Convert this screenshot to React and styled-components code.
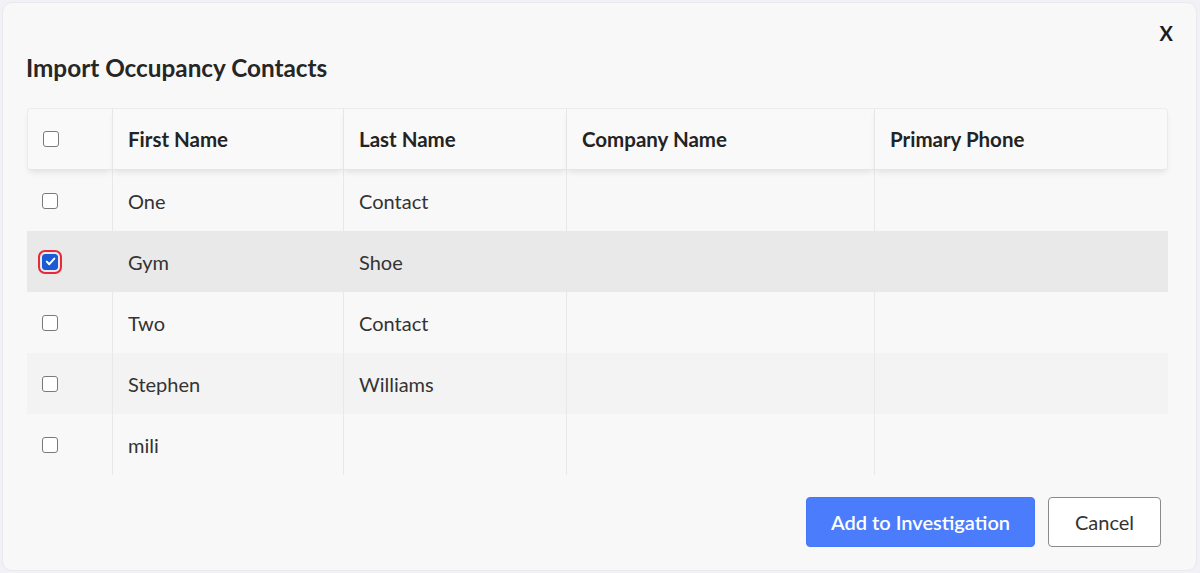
import React, { useState } from "react";
import styled, { createGlobalStyle, css } from "styled-components";

const GlobalStyle = createGlobalStyle`
    html, body {
        margin: 0;
        padding: 0;
        background: #f1f1f6;
        font-family: Lato, "Open Sans", sans-serif;
    }
    * { box-sizing: border-box; }
`;

const Modal = styled.div`
    margin: 2px;
    height: 569px;
    width: 1195px;
    background: #f8f8f8;
    border: 1px solid #e9e9ef;
    border-radius: 10px;
    display: flex;
    flex-direction: column;
    padding: 17px 28px 23px 24px;
`;

const CloseRow = styled.div`
    display: flex;
    justify-content: flex-end;
    height: 26px;
    margin-right: -5px;
`;

const CloseButton = styled.button`
    border: none;
    background: none;
    padding: 0;
    font-family: Lato, sans-serif;
    font-size: 20px;
    font-weight: 700;
    line-height: 26px;
    color: #1c1c1c;
    cursor: pointer;
`;

const Title = styled.h2`
    margin: 7px 0 0 -1px;
    font-size: 24.3px;
    line-height: 30px;
    font-weight: 700;
    color: #262626;
`;

const Table = styled.div`
    margin-top: 25px;
    display: grid;
    grid-template-columns: 85px 231px 223px 308px 294px;
`;

const HeaderRow = styled.div`
    display: contents;
`;

const HeadCell = styled.div`
    height: 62px;
    display: flex;
    align-items: center;
    padding-left: 15px;
    background: #f9f9f9;
    border-top: 1px solid #ececec;
    border-bottom: 1px solid #e6e6e6;
    border-left: 1px solid ${(p) => (p.$first ? "#ececec" : "#e6e6e6")};
    border-right: ${(p) => (p.$last ? "1px solid #ececec" : "none")};
    border-radius: ${(p) => (p.$first ? "4px 0 0 4px" : p.$last ? "0 4px 4px 0" : "0")};
    box-shadow: 0 4px 6px -2px rgba(0, 0, 0, 0.1);
    font-size: 20.5px;
    font-weight: 700;
    color: #232323;
    position: relative;
    z-index: 1;
`;

const Row = styled.div`
    display: contents;
`;

const Cell = styled.div`
    height: 61px;
    display: flex;
    align-items: center;
    padding-left: 15px;
    border-left: ${(p) => (p.$check ? "none" : "1px solid #e8e8e8")};
    background: ${(p) => (p.$selected ? "#e9e9e9" : p.$striped ? "#f3f3f3" : "transparent")};
    font-size: 20px;
    color: #333;
`;

const Box = styled.span`
    width: 16px;
    height: 16px;
    border-radius: 3px;
    border: 1px solid #7a7a7a;
    background: #fff;
    display: inline-flex;
    align-items: center;
    justify-content: center;
    cursor: pointer;
    ${(p) =>
        p.$checked &&
        css`
            background: #1a5bd3;
            border-color: #1a5bd3;
            outline: 2px solid #e8283d;
            outline-offset: 2px;
        `}
`;

const Footer = styled.div`
    margin-top: auto;
    display: flex;
    justify-content: flex-end;
    gap: 13px;
    padding-right: 7px;
`;

const Button = styled.button`
    height: 50px;
    border-radius: 4px;
    font-family: Lato, sans-serif;
    font-size: 20px;
    cursor: pointer;
    ${(p) =>
        p.$primary
            ? css`
                  width: 229px;
                  background: #4b7cfb;
                  border: 1px solid #4677f5;
                  color: #fff;
                  font-weight: 600;
              `
            : css`
                  width: 113px;
                  background: #fff;
                  border: 1px solid #8a8a8a;
                  color: #333;
                  font-weight: 400;
              `}
`;

const Checkbox = ({ checked, onClick }) => (
    <Box $checked={checked} onClick={onClick}>
        {checked && (
            <svg width="11" height="11" viewBox="0 0 11 11">
                <path d="M1.8 5.6 L4.3 8.2 L9.3 2.6" fill="none" stroke="#fff" strokeWidth="2" strokeLinecap="round" strokeLinejoin="round" />
            </svg>
        )}
    </Box>
);

const contacts = [
    { first: "One", last: "Contact", company: "", phone: "" },
    { first: "Gym", last: "Shoe", company: "", phone: "" },
    { first: "Two", last: "Contact", company: "", phone: "" },
    { first: "Stephen", last: "Williams", company: "", phone: "" },
    { first: "mili", last: "", company: "", phone: "" },
];

export default function App() {
    const [selected, setSelected] = useState([1]);

    const toggle = (i) => {
        setSelected((s) => (s.includes(i) ? s.filter((x) => x !== i) : [...s, i]));
    };

    return (
        <>
            <GlobalStyle />
            <Modal>
                <CloseRow>
                    <CloseButton>X</CloseButton>
                </CloseRow>
                <Title>Import Occupancy Contacts</Title>
                <Table>
                    <HeaderRow>
                        <HeadCell $first>
                            <Checkbox checked={false} />
                        </HeadCell>
                        <HeadCell>First Name</HeadCell>
                        <HeadCell>Last Name</HeadCell>
                        <HeadCell>Company Name</HeadCell>
                        <HeadCell $last>Primary Phone</HeadCell>
                    </HeaderRow>
                    {contacts.map((c, i) => {
                        const sel = selected.includes(i);
                        const striped = i === 3;
                        return (
                            <Row key={i}>
                                <Cell $check $selected={sel} $striped={striped}>
                                    <Checkbox checked={sel} onClick={() => toggle(i)} />
                                </Cell>
                                <Cell $selected={sel} $striped={striped}>{c.first}</Cell>
                                <Cell $selected={sel} $striped={striped}>{c.last}</Cell>
                                <Cell $selected={sel} $striped={striped}>{c.company}</Cell>
                                <Cell $selected={sel} $striped={striped}>{c.phone}</Cell>
                            </Row>
                        );
                    })}
                </Table>
                <Footer>
                    <Button $primary>Add to Investigation</Button>
                    <Button>Cancel</Button>
                </Footer>
            </Modal>
        </>
    );
}
